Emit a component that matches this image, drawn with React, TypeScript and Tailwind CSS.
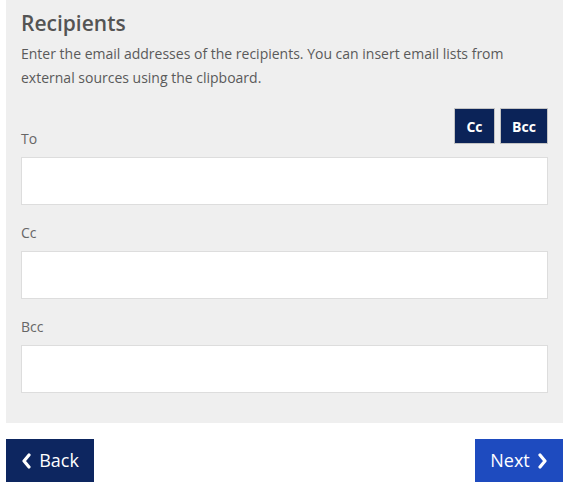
import React from "react";

const font = { fontFamily: '"Open Sans", "Noto Sans", sans-serif' };

function Field({ label }: { label: string }) {
  return (
    <div className="flex flex-col">
      <div className="h-[46px] flex items-end pb-[8px] text-[14px] leading-[20px] text-[#666]">{label}</div>
      <div className="h-[48px] bg-white border border-[#dddddd]" />
    </div>
  );
}

export default function App() {
  return (
    <div className="w-[572px] h-[500px] bg-white" style={font}>
      <div className="ml-[6px] w-[557px] bg-[#efefef] px-[15px] pt-[8px] pb-[30px]">
        <h2 className="text-[21px] leading-[30px] font-semibold text-[#545454]">Recipients</h2>
        <p className="mt-[4px] text-[14px] leading-[24px] text-[#5a5a5a]">
          Enter the email addresses of the recipients. You can insert email lists from external sources using the clipboard.
        </p>
        <div className="mt-[18px] flex items-end justify-between">
          <div className="text-[14px] leading-[20px] text-[#666] mb-[-5px]">To</div>
          <div className="flex gap-[5px]">
            <button className="w-[41px] h-[36px] bg-[#0b2358] border border-[#c4c4c4] text-white text-[14px] font-bold">Cc</button>
            <button className="w-[48px] h-[36px] bg-[#0b2358] border border-[#c4c4c4] text-white text-[14px] font-bold">Bcc</button>
          </div>
        </div>
        <div className="mt-[13px] h-[48px] bg-white border border-[#dddddd]" />
        <Field label="Cc" />
        <Field label="Bcc" />
      </div>
      <div className="ml-[6px] w-[557px] mt-[16px] flex justify-between">
        <button className="w-[88px] h-[43px] bg-[#0d2660] text-white text-[18px] flex items-center justify-center gap-[7px]">
          <svg width="11" height="16" viewBox="0 0 11 16">
            <polyline points="8,2 3,8 8,14" fill="none" stroke="white" strokeWidth="3.2" strokeLinecap="round" strokeLinejoin="round" />
          </svg>
          <span>Back</span>
        </button>
        <button className="w-[88px] h-[43px] bg-[#1e4bbf] text-white text-[18px] flex items-center justify-center gap-[7px]">
          <span>Next</span>
          <svg width="11" height="16" viewBox="0 0 11 16">
            <polyline points="3,2 8,8 3,14" fill="none" stroke="white" strokeWidth="3.2" strokeLinecap="round" strokeLinejoin="round" />
          </svg>
        </button>
      </div>
    </div>
  );
}
